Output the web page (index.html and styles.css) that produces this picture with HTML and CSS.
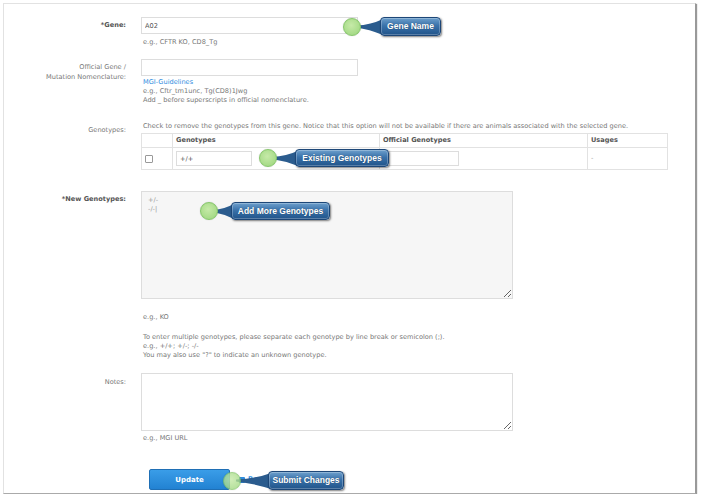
FILE: index.html
```html
<!DOCTYPE html>
<html lang="en">

<head>
    <meta charset="UTF-8">
    <meta name="viewport" content="width=device-width, initial-scale=1.0">
    <title>Edit Gene</title>

    <link rel="stylesheet" href="styles.css">
</head>

<body>
    <div class="frame">
        <form id="geneForm">
            <div class="row row-gene">
                <label class="label req" for="gene">*Gene:</label>
                <div class="field">
                    <input class="text" type="text" id="gene" value="A02">
                    <p class="hint hint-top">e.g., CFTR KO, CD8_Tg</p>
                </div>
            </div>

            <div class="row row-official">
                <label class="label label-two" for="official">Official Gene /<br>Mutation Nomenclature:</label>
                <div class="field">
                    <input class="text" type="text" id="official">
                    <p class="hint hint-top"><a href="#" class="link">MGI-Guidelines</a><br>
                        e.g., Cftr_tm1unc, Tg(CD8)1Jwg<br>
                        Add _ before superscripts in official nomenclature.</p>
                </div>
            </div>

            <div class="row row-genotypes">
                <span class="label">Genotypes:</span>
                <div class="field">
                    <p class="hint">Check to remove the genotypes from this gene. Notice that this option will not be available if there are animals associated with the selected gene.</p>
                    <table class="geno-table">
                        <tr>
                            <th class="col-check"></th>
                            <th class="col-geno">Genotypes</th>
                            <th class="col-official">Official Genotypes</th>
                            <th class="col-usage">Usages</th>
                        </tr>
                        <tr>
                            <td><span class="check"></span></td>
                            <td><input class="text small" type="text" value="+/+"></td>
                            <td><input class="text small" type="text"></td>
                            <td class="usage">-</td>
                        </tr>
                    </table>
                </div>
            </div>

            <div class="row row-new">
                <label class="label req label-area" for="newGeno">*New Genotypes:</label>
                <div class="field">
                    <textarea class="area area-new" id="newGeno">+/-
-/-|</textarea>
                    <p class="hint hint-ko">e.g., KO</p>
                    <p class="hint hint-multi">To enter multiple genotypes, please separate each genotype by line break or semicolon (;).<br>
                        e.g., +/+; +/-; -/-<br>
                        You may also use "?" to indicate an unknown genotype.</p>
                </div>
            </div>

            <div class="row row-notes">
                <label class="label label-notes" for="notes">Notes:</label>
                <div class="field">
                    <textarea class="area area-notes" id="notes"></textarea>
                    <p class="hint hint-url">e.g., MGI URL</p>
                </div>
            </div>

            <div class="row row-actions">
                <span class="label"></span>
                <div class="field actions">
                    <button type="submit" class="btn-update">Update</button>
                    <a href="#" class="reset"><span class="reset-icon"></span>Reset</a>
                </div>
            </div>
        </form>

        <!-- tutorial callouts -->
        <div class="callout callout-gene">
            <span class="dot"></span>
            <svg class="tail" viewBox="0 0 30 20" preserveAspectRatio="none"><path d="M0 9 Q17 8 30 2 L30 19 Q15 13 0 11 Z"/></svg>
            <span class="bubble">Gene Name</span>
        </div>
        <div class="callout callout-existing">
            <span class="dot"></span>
            <svg class="tail" viewBox="0 0 30 20" preserveAspectRatio="none"><path d="M0 9 Q17 8 30 2 L30 19 Q15 13 0 11 Z"/></svg>
            <span class="bubble">Existing Genotypes</span>
        </div>
        <div class="callout callout-add">
            <span class="dot"></span>
            <svg class="tail" viewBox="0 0 30 20" preserveAspectRatio="none"><path d="M0 9 Q17 8 30 2 L30 19 Q15 13 0 11 Z"/></svg>
            <span class="bubble">Add More Genotypes</span>
        </div>
        <div class="callout callout-submit">
            <span class="dot dot-clear"></span>
            <svg class="tail" viewBox="0 0 30 20" preserveAspectRatio="none"><path d="M0 9 Q17 8 30 2 L30 19 Q15 13 0 11 Z"/></svg>
            <span class="bubble">Submit Changes</span>
        </div>
    </div>
</body>

</html>
```

FILE: styles.css
```css
body {
    margin: 0;
    background: #fff;
    font-family: "DejaVu Sans", Verdana, sans-serif;
    font-size: 6.6px;
    line-height: 9px;
    color: #666;
}

.frame {
    position: relative;
    margin: 3px 0 0 3px;
    width: 693px;
    height: 491px;
    border: 1px solid #e2e2e2;
    border-right-color: #999;
    border-bottom-color: #aaa;
    box-shadow: 1px 1px 1px #999;
    overflow: hidden;
    padding-top: 13px;
    box-sizing: border-box;
}

.row {
    display: grid;
    grid-template-columns: 122px 1fr;
    column-gap: 15px;
}

.label {
    text-align: right;
    padding-top: 4px;
    color: #777;
}

.req {
    font-weight: bold;
    color: #555;
}

.label-two {
    padding-top: 3px;
    line-height: 10px;
}

.label-area {
    padding-top: 4px;
}

.label-notes {
    padding-top: 5px;
}

.field p {
    margin: 0;
}

.hint {
    color: #777;
    padding-left: 2px;
}

.hint-top {
    margin-top: 4px !important;
}

.row-official .hint-top {
    margin-top: 2px !important;
}

.link {
    color: #2f8de0;
    text-decoration: none;
}

input.text {
    display: block;
    width: 217px;
    height: 17px;
    box-sizing: border-box;
    border: 1px solid #ddd;
    padding: 0 3px;
    font-family: "DejaVu Sans", Verdana, sans-serif;
    font-size: 6.6px;
    color: #555;
    background: #fff;
    outline: none;
}

input.small {
    width: 76px;
    height: 15px;
}

.row-official {
    margin-top: 12px;
}

.row-genotypes {
    margin-top: 17px;
}

.geno-table {
    margin-top: 2px;
    width: 527px;
    border-collapse: collapse;
    table-layout: fixed;
}

.geno-table th,
.geno-table td {
    border: 1px solid #e2e2e2;
    text-align: left;
    padding: 0 3px;
}

.geno-table th {
    height: 13px;
    color: #555;
    font-weight: bold;
}

.geno-table td {
    height: 21px;
}

.col-check {
    width: 24px;
}

.col-geno {
    width: 200px;
}

.col-official {
    width: 201px;
}

.check {
    display: block;
    width: 6px;
    height: 6px;
    border: 1px solid #999;
    border-radius: 1px;
    background: #fff;
}

.usage {
    color: #999;
}

.row-new {
    margin-top: 21px;
}

.area {
    display: block;
    width: 372px;
    box-sizing: border-box;
    border: 1px solid #ddd;
    padding: 4px 6px;
    font-family: "DejaVu Sans", Verdana, sans-serif;
    font-size: 6.6px;
    line-height: 9px;
    color: #999;
    resize: vertical;
    outline: none;
}

.area-new {
    height: 108px;
    background: #f6f6f6;
}

.area-notes {
    height: 58px;
    background: #fff;
}

.hint-ko {
    margin-top: 14px !important;
}

.hint-multi {
    margin-top: 11px !important;
}

.row-notes {
    margin-top: 13px;
}

.hint-url {
    margin-top: 3px !important;
}

.row-actions {
    margin-top: 26px;
}

.actions {
    display: flex;
    align-items: center;
    padding-left: 8px;
}

.btn-update {
    width: 81px;
    height: 21px;
    border: 1px solid #1f6fb5;
    border-radius: 2px;
    background: linear-gradient(#3a9de8, #2282d2);
    color: #fff;
    font-family: "DejaVu Sans", Verdana, sans-serif;
    font-size: 7px;
    font-weight: bold;
    cursor: pointer;
}

.reset {
    display: flex;
    align-items: center;
    margin-left: 9px;
    color: #2f8de0;
    font-weight: bold;
    text-decoration: none;
}

.reset-icon {
    width: 6px;
    height: 6px;
    margin-right: 3px;
    background: #2f8de0;
    border-radius: 1px;
}

/* callouts */
.callout {
    position: absolute;
    display: flex;
    align-items: center;
}

.dot {
    position: relative;
    z-index: 2;
    width: 18px;
    height: 18px;
    box-sizing: border-box;
    border-radius: 50%;
    border: 1px solid #86c76a;
    background: radial-gradient(circle at 45% 40%, #c6eaa8, #a5da86 75%);
    box-shadow: 0 0 1px rgba(0, 0, 0, 0.3);
}

.dot-clear {
    opacity: 0.8;
}

.tail {
    position: relative;
    z-index: 1;
    height: 100%;
    margin-left: -5px;
    fill: #2b5c8e;
}

.bubble {
    position: relative;
    z-index: 3;
    margin-left: -3px;
    height: 100%;
    box-sizing: border-box;
    border: 1px solid #1d4778;
    border-radius: 4px;
    background: linear-gradient(#6d9fcc, #3a72aa 45%, #21548a);
    box-shadow: 1px 1px 2px rgba(0, 0, 0, 0.5), inset 0 0 0 1px rgba(255, 255, 255, 0.25);
    color: #fff;
    font-family: "Liberation Sans", Arial, sans-serif;
    font-size: 8.5px;
    font-weight: bold;
    text-align: center;
    display: flex;
    align-items: center;
    justify-content: center;
    text-shadow: 0 0 1px rgba(0, 0, 0, 0.4);
}

.callout-gene {
    left: 339px;
    top: 13px;
    height: 19px;
}

.callout-gene .tail {
    width: 27px;
}

.callout-gene .bubble {
    width: 61px;
}

.callout-existing {
    left: 255px;
    top: 145px;
    height: 18px;
}

.callout-existing .tail {
    width: 26px;
}

.callout-existing .bubble {
    width: 94px;
}

.callout-add {
    left: 196px;
    top: 198px;
    height: 18px;
}

.callout-add .tail {
    width: 21px;
}

.callout-add .bubble {
    width: 99px;
}

.callout-submit {
    left: 219px;
    top: 467px;
    height: 19px;
}

.callout-submit .tail {
    width: 35px;
}

.callout-submit .bubble {
    width: 76px;
}
```
